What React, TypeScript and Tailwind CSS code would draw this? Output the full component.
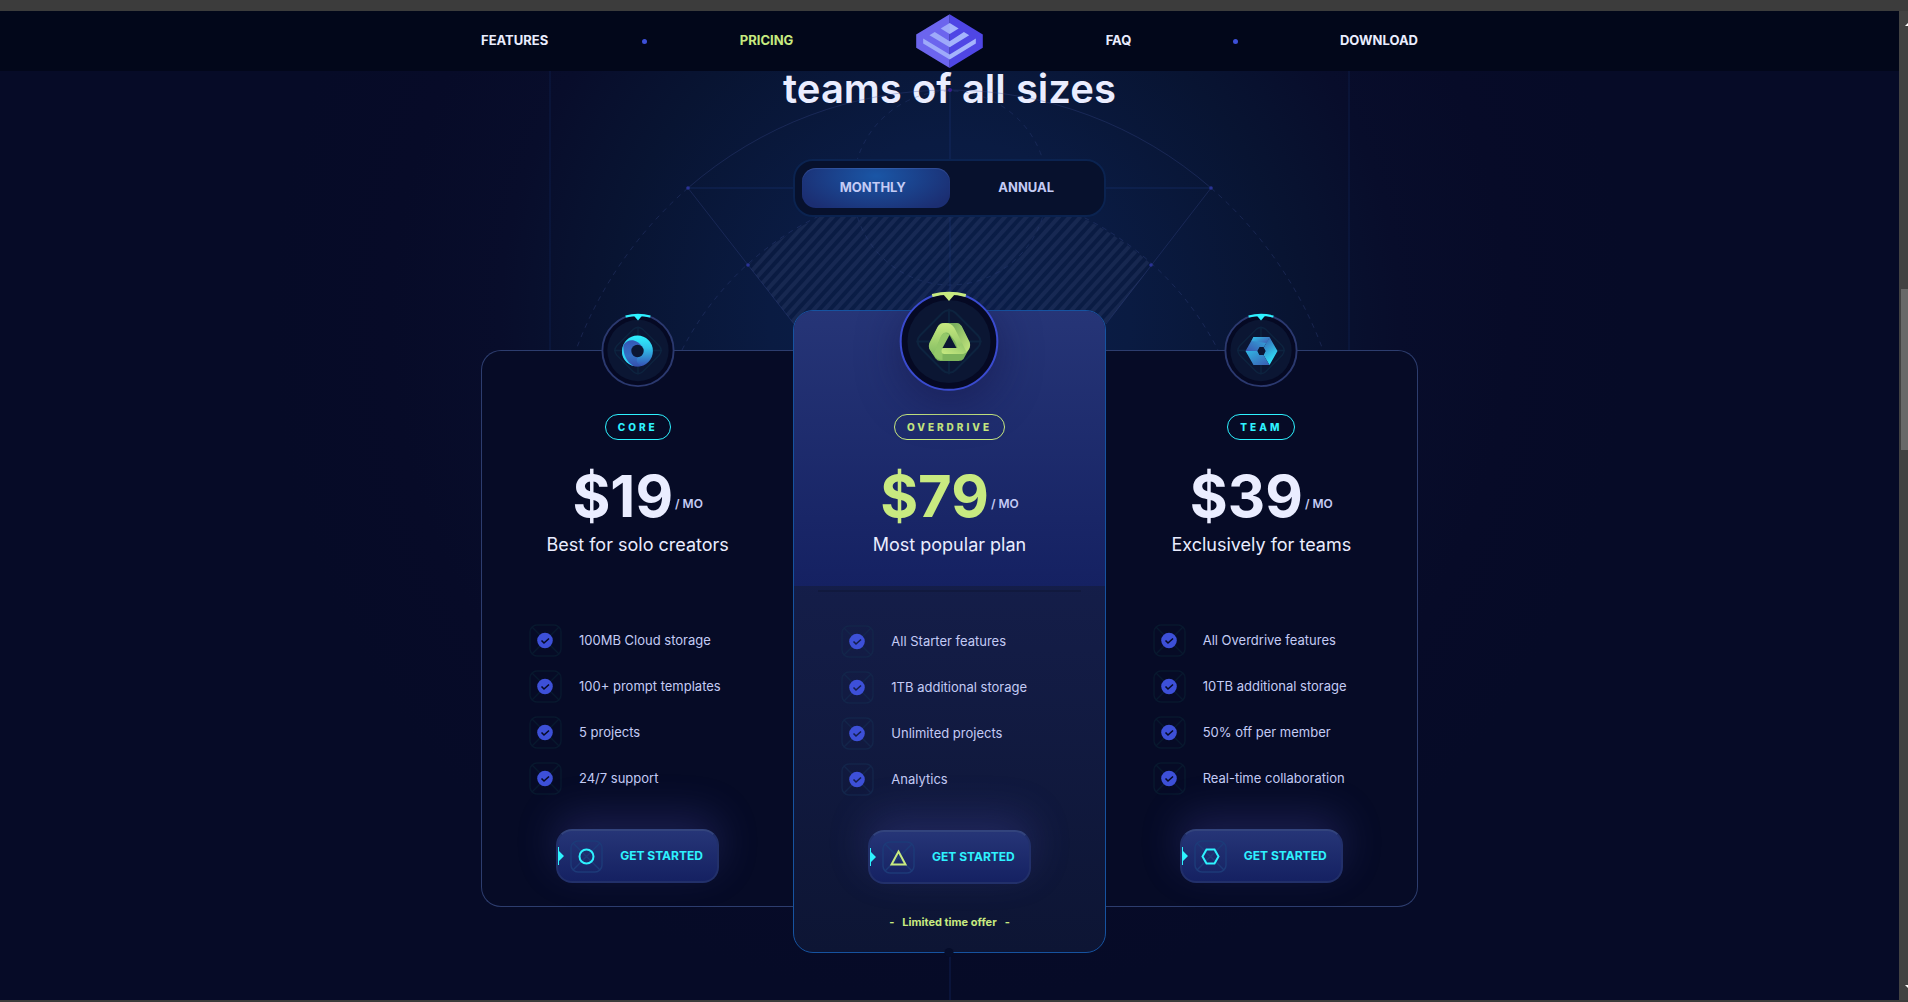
import { useState, type ReactNode } from "react";

function Logo() {
  return (
    <svg viewBox="48 26 201 163" width="67" height="54" aria-hidden="true">
      <path d="M149 27 48 88v40l101 61z" fill="#6d66ee" />
      <path d="m149 27 100 61v40l-100 61z" fill="#4f46e5" />
      <g fill="#a5b4fc">
        <path d="m149 53 27 17-27 16-27-16z" />
        <path d="m88 90 16-10 45 28 43-28 16 10-59 36z" />
        <path d="m69 100 80 48 79-48v15l-79 48-80-48z" />
      </g>
      <path d="M149 27 48 88v40l101 61z" fill="#6d66ee" opacity=".12" />
    </svg>
  );
}

function Backdrop() {
  return (
    <svg
      className="pointer-events-none absolute top-0 left-1/2 z-10 -translate-x-1/2"
      width="1000"
      height="929"
      viewBox="-500 71 1000 929"
      fill="none"
      aria-hidden="true"
    >
      <defs>
        <pattern id="hatch" width="8" height="8" patternUnits="userSpaceOnUse" patternTransform="rotate(42)">
          <rect width="4" height="8" fill="#5b6a9c" fillOpacity=".16" />
        </pattern>
      </defs>
      <path d="M-202 265A301 301 0 0 1 202 265L156 324V340H-156V324Z" fill="url(#hatch)" />
      <g stroke="#1d3a86" strokeOpacity=".3">
        <path d="M-400 71V350M399 71V350" />
        <path d="M0 90V340M0 955V1000" strokeWidth="2" strokeOpacity=".2" />
        <path d="M-262 188H261" strokeWidth="2" strokeOpacity=".22" />
      </g>
      <g stroke="#3a4a8e" strokeOpacity=".32">
        <path d="M-262 188A398 398 0 0 1 261 188" />
        <path d="M-262 188-156 324M261 188 156 324" />
        <g strokeDasharray="5 5">
          <path d="M-262 188A398 398 0 0 0-374 350M261 188A398 398 0 0 1 373 350" />
          <path d="M-268 350A301 301 0 0 1 268 350" />
          <circle cy="188" r="97" strokeOpacity=".28" />
        </g>
      </g>
      <g fill="#2a3396">
        <circle cx="-262" cy="188" r="1.8" />
        <circle cx="261" cy="188" r="1.8" />
        <circle cx="-202" cy="265" r="1.8" />
        <circle cx="201" cy="265" r="1.8" />
        <circle cy="90" r="2" fill="#3a1f8e" />
      </g>
    </svg>
  );
}

function CoreMark() {
  return (
    <svg viewBox="-16 -16 32 32" width="32" height="32" aria-hidden="true">
      <defs>
        <linearGradient id="core-a" x1="0" y1="0" x2="0" y2="1">
          <stop offset="0" stopColor="#2ef2ff" />
          <stop offset=".4" stopColor="#2fc4ea" />
          <stop offset="1" stopColor="#3550b5" />
        </linearGradient>
        <linearGradient id="core-b" x1=".3" y1="0" x2=".3" y2="1">
          <stop offset="0" stopColor="#3557b6" />
          <stop offset=".6" stopColor="#3470c4" />
          <stop offset="1" stopColor="#344fae" />
        </linearGradient>
      </defs>
      <circle r="15.4" fill="url(#core-a)" />
      <path
        d="M-14-6C-10-12.500-1-13 5-4L0 6C-2 10 0 13 4 14.800C-1 16-5 15-8 13C-13 8-15 2-14-6Z"
        fill="url(#core-b)"
      />
      <path d="M-14.500-5C-14 4-11 11-4 14.900C-11 13-16 7-15.400 0Z" fill="#2fd8f4" />
      <circle r="6.200" fill="#0b1633" />
    </svg>
  );
}

function OverdriveMark() {
  return (
    <svg viewBox="0 0 42 38" width="42" height="38" aria-hidden="true">
      <defs>
        <linearGradient id="od-a" x1="0" y1="0" x2="0" y2="1">
          <stop offset="0" stopColor="#c8ea80" />
          <stop offset="1" stopColor="#84bd63" />
        </linearGradient>
        <linearGradient id="od-b" x1="0" y1="0" x2="1" y2="1">
          <stop offset="0" stopColor="#6ea557" />
          <stop offset="1" stopColor="#c8ea80" />
        </linearGradient>
        <linearGradient id="od-c" x1="1" y1="0" x2="0" y2="1">
          <stop offset="0" stopColor="#8cc267" />
          <stop offset="1" stopColor="#c8ea80" />
        </linearGradient>
      </defs>
      <path
        d="M14 0H28Q31 0 33 3L41 19Q42.500 22 41 25L35 36Q33.500 38 30 38H12Q9 38 7 35.500L1 26Q-.5 23 1 20L10 3Q11.500 0 14 0Z"
        fill="#7db45c"
      />
      <path d="M20 0H28Q31 0 33 3L41 19Q42.500 22 41 25Q39 30 33 31L29 25Z" fill="url(#od-b)" />
      <path d="M17 0Q23 0 26 5L32 17Q34 22 31 24L21 11Q16 7 12.500 14L5 32L1 26Q-.5 23 1 20L9 4Q11 0 17 0Z" fill="url(#od-a)" />
      <path d="M21 12Q15 7 12 14L5 31Q8 37 14 37V31Z" fill="#94c869" />
      <path d="M13 28Q13 25 16 25H30Q33 24 33 19L38 29Q36 31 33 31H16Q13 31 13 28Z" fill="url(#od-c)" />
      <path d="M21 12 28 25H14Z" fill="#0b1633" />
    </svg>
  );
}

function TeamMark() {
  return (
    <svg viewBox="-17 -15 34 30" width="34" height="30" aria-hidden="true">
      <defs>
        <linearGradient id="tm-a" x1="0" y1="0" x2="1" y2=".6">
          <stop offset="0" stopColor="#31c3ea" />
          <stop offset="1" stopColor="#3e68ba" />
        </linearGradient>
        <linearGradient id="tm-b" x1="0" y1="0" x2=".4" y2="1">
          <stop offset="0" stopColor="#3858ae" />
          <stop offset="1" stopColor="#2fe6fb" />
        </linearGradient>
        <linearGradient id="tm-c" x1="1" y1="1" x2="0" y2="0">
          <stop offset="0" stopColor="#3a5cb0" />
          <stop offset="1" stopColor="#30b6e4" />
        </linearGradient>
        <linearGradient id="tm-d" x1="0" y1="1" x2="1" y2="0">
          <stop offset="0" stopColor="#3a55b0" />
          <stop offset="1" stopColor="#31b9e4" />
        </linearGradient>
      </defs>
      <path d="M-16 0-8-14H8L2-3H-2L-4 0Z" fill="url(#tm-d)" />
      <path d="M-8-14H8L5-8-10-10Z" fill="url(#tm-a)" />
      <path d="M8-14 16 0 8 14 2 4 4 0 2-3Z" fill="url(#tm-b)" />
      <path d="M-16 0H-4L-2 4H2L8 14H-8Z" fill="url(#tm-c)" />
      <path d="M-4 0-2-4H2L4 0 2 4H-2Z" fill="#0b1633" />
    </svg>
  );
}

function Medallion({ large = false, children }: { large?: boolean; children: ReactNode }) {
  const accent = large ? "#c8ea80" : "#2ef2ff";
  return (
    <div
      className={
        large
          ? "absolute top-[-19px] left-1/2 z-10 size-[99px] -translate-x-1/2 rounded-full shadow-[0_12px_40px_rgba(20,20,70,0.5)]"
          : "absolute top-[-37px] left-1/2 z-10 size-[73px] -translate-x-1/2 rounded-full"
      }
    >
      <svg viewBox="-50 -50 100 100" className="block size-full overflow-visible" fill="none" aria-hidden="true">
        <circle r="48.800" fill="#050923" stroke={large ? "#3a4bd0" : "#2b396f"} strokeWidth={large ? 2 : 2.6} />
        <circle r="42" fill="#0b1633" />
        <g stroke="#0f2c47" strokeWidth="2" opacity=".6">
          <rect x="-25" y="-25" width="50" height="50" rx="9" transform="rotate(45)" />
          <path d="M0-33V33M-33 0H33" />
        </g>
        <path d="M-17-46.500Q0-51 17-46.500" stroke={accent} strokeWidth="3" />
        <path d="M-6.500-48.500H6.500L0-41Z" fill={accent} />
      </svg>
      <span className="absolute inset-0 flex items-center justify-center">{children}</span>
    </div>
  );
}

function BoxLines({ stroke }: { stroke: string }) {
  return (
    <>
      <rect x="1" y="1" width="31" height="31" rx="7" stroke={stroke} strokeWidth="1.500" />
      <path d="m3 3 27 27M30 3 3 30" stroke={stroke} strokeWidth="1.500" />
    </>
  );
}

function CheckBadge({ featured }: { featured: boolean }) {
  return (
    <svg width="33" height="33" viewBox="0 0 33 33" fill="none" className="shrink-0" aria-hidden="true">
      <BoxLines stroke={featured ? "#13254a" : "#08182e"} />
      <circle cx="16" cy="16.500" r="7.800" fill="#3d50d8" />
      <path d="m12.500 16.500 2.500 2.500 5-4.500" stroke={featured ? "#151e4b" : "#060a25"} strokeWidth="1.600" />
    </svg>
  );
}

type Shape = "circle" | "triangle" | "hexagon";

function CtaIcon({ shape }: { shape: Shape }) {
  return (
    <svg width="33" height="33" viewBox="0 0 33 33" fill="none" className="shrink-0" aria-hidden="true">
      <BoxLines stroke="#1d3a78" />
      {shape === "circle" && <circle cx="16.500" cy="16.500" r="7" stroke="#2ef2ff" strokeWidth="2" />}
      {shape === "triangle" && <path d="M16.500 10.500 23.500 23.500H9.500Z" stroke="#c8ea80" strokeWidth="2" />}
      {shape === "hexagon" && (
        <path d="M12.500 9.500H20.500L24.500 16.500 20.500 23.500H12.500L8.500 16.500Z" stroke="#2ef2ff" strokeWidth="2" />
      )}
    </svg>
  );
}

type Plan = {
  name: string;
  price: string;
  tagline: string;
  features: string[];
  shape: Shape;
  mark: ReactNode;
  frame: string;
  featured?: boolean;
};

const plans: Plan[] = [
  {
    name: "CORE",
    price: "$19",
    tagline: "Best for solo creators",
    features: ["100MB Cloud storage", "100+ prompt templates", "5 projects", "24/7 support"],
    shape: "circle",
    mark: <CoreMark />,
    frame: "mt-10 rounded-l-[20px] border-y border-l border-[#2d3d6e] bg-[#060b26] pt-[63px] pb-[23px]",
  },
  {
    name: "OVERDRIVE",
    price: "$79",
    tagline: "Most popular plan",
    features: ["All Starter features", "1TB additional storage", "Unlimited projects", "Analytics"],
    shape: "triangle",
    mark: <OverdriveMark />,
    frame: "rounded-[20px] border border-[#1653a0] bg-linear-to-b from-[#1a2459] to-[#0d1534] pb-[22px]",
    featured: true,
  },
  {
    name: "TEAM",
    price: "$39",
    tagline: "Exclusively for teams",
    features: ["All Overdrive features", "10TB additional storage", "50% off per member", "Real-time collaboration"],
    shape: "hexagon",
    mark: <TeamMark />,
    frame: "mt-10 rounded-r-[20px] border-y border-r border-[#2d3d6e] bg-[#060b26] pt-[63px] pb-[23px]",
  },
];

function PlanCard({ plan }: { plan: Plan }) {
  const featured = Boolean(plan.featured);
  return (
    <article className={`relative z-20 flex flex-col ${plan.frame}`}>
      <Medallion large={featured}>{plan.mark}</Medallion>
      <div
        className={
          featured
            ? "flex flex-col items-center rounded-t-[19px] bg-linear-to-b from-[#263577] to-[#152162] pt-[103px] pb-[27px]"
            : "flex flex-col items-center pb-[27px]"
        }
      >
        <h3
          className={`flex h-[26px] items-center rounded-full border px-3 text-[10px] font-extrabold tracking-[0.3em] ${
            featured ? "border-[#c8ea80] text-[#c8ea80]" : "border-[#2ef2ff] text-[#2ef2ff]"
          }`}
        >
          {plan.name}
        </h3>
        <p className="mt-6 flex items-end gap-0.5">
          <span className={`text-[58px] leading-[64px] font-bold ${featured ? "text-[#c8ea80]" : "text-[#eaedff]"}`}>
            {plan.price}
          </span>
          <span className="pb-4 text-xs leading-4 font-semibold text-[#c4cbf5]">/ MO</span>
        </p>
        <p className="mt-[3px] text-lg leading-7 text-[#eaedff]">{plan.tagline}</p>
      </div>
      {featured && <div className="mx-6 mt-1 -mb-[5px] h-0.5 bg-[#10183a] opacity-70" />}
      <ul className="flex flex-col gap-[13px] pt-[38px] pl-[47px]">
        {plan.features.map((feature) => (
          <li key={feature} className="flex items-center gap-[17px] text-[13px] text-[#c4cbf5]">
            <CheckBadge featured={featured} />
            {feature}
          </li>
        ))}
      </ul>
      <button
        type="button"
        className="relative mt-[34px] flex h-[54px] w-[163px] items-center self-center rounded-2xl border-2 border-[#22306a] border-t-[#33447d] bg-linear-to-b from-[#263577] to-[#152162] pl-3 shadow-[0_-14px_40px_rgba(86,88,200,0.24)]"
      >
        <svg viewBox="0 0 6 18" width="6" height="18" className="absolute left-0" fill="#2ef2ff" aria-hidden="true">
          <path d="M0 0H1V4L6 9 1 14V18H0Z" />
        </svg>
        <CtaIcon shape={plan.shape} />
        <span className="ml-[17px] text-xs font-bold whitespace-nowrap text-[#2ef2ff]">GET STARTED</span>
      </button>
      {featured && (
        <p className="mt-[30px] flex justify-center gap-2 text-[11px] leading-4 font-bold text-[#c8ea80]">
          <span>-</span>
          <span>Limited time offer</span>
          <span>-</span>
        </p>
      )}
      {featured && (
        <span className="absolute bottom-[-5px] left-1/2 size-[9px] -translate-x-1/2 rounded-full bg-[#060d2a]" />
      )}
    </article>
  );
}

const linkStyle = "transition-colors hover:text-[#c8ea80]";

function Header() {
  return (
    <header className="flex h-[60px] justify-center bg-[#02071a]">
      <nav className="grid w-full max-w-[937px] grid-cols-3 items-center text-[13px] font-bold text-[#eaedff]">
        <div className="flex items-center justify-between">
          <a href="#features" className={linkStyle}>FEATURES</a>
          <span className="size-[5px] rounded-full bg-[#3d50d8]" />
          <a href="#pricing" className="text-[#c8ea80]">PRICING</a>
        </div>
        <a href="#home" aria-label="Home" className="justify-self-center">
          <Logo />
        </a>
        <div className="flex items-center justify-between">
          <a href="#faq" className={linkStyle}>FAQ</a>
          <span className="size-[5px] rounded-full bg-[#3d50d8]" />
          <a href="#download" className={linkStyle}>DOWNLOAD</a>
        </div>
      </nav>
    </header>
  );
}

function BillingToggle() {
  const [annual, setAnnual] = useState(false);
  const on =
    "bg-[radial-gradient(ellipse_60%_110%_at_50%_20%,#1a56a6,#1b2e72_95%)] shadow-[inset_0_1px_1px_rgba(120,140,220,0.25)]";
  return (
    <div
      role="group"
      aria-label="Billing period"
      className="relative z-20 mx-auto mt-[50px] grid w-full max-w-[313px] grid-cols-2 rounded-[20px] border-2 border-[#0b2350] bg-[#07112d] p-[7px] text-[13px] font-bold text-[#c4cbf5]"
    >
      <button type="button" aria-pressed={!annual} onClick={() => setAnnual(false)} className={`h-10 rounded-[14px] pr-1.5 ${annual ? "" : on}`}>
        MONTHLY
      </button>
      <button type="button" aria-pressed={annual} onClick={() => setAnnual(true)} className={`h-10 rounded-[14px] pl-1.5 ${annual ? on : ""}`}>
        ANNUAL
      </button>
    </div>
  );
}

function Scrollbar() {
  return (
    <div className="flex w-[9px] shrink-0 flex-col bg-[#424242] pl-0.5" aria-hidden="true">
      <svg viewBox="0 0 7 4" width="7" height="4" className="mt-[11px]" fill="#fff">
        <path d="M4 4 8 0V4Z" />
      </svg>
      <div className="mt-[263px] h-[161px] bg-[#696969]" />
      <svg viewBox="0 0 7 4" width="7" height="4" className="mt-auto mb-[11px]" fill="#fff">
        <path d="M4 0 8 4V0Z" />
      </svg>
    </div>
  );
}

export default function App() {
  return (
    <div className="flex min-h-screen flex-col border-t-[11px] border-b-2 border-t-[#3c3c3c] border-b-[#3c3d3c] bg-[#060b27] font-[Inter,sans-serif]">
      <div className="flex grow">
        <div className="flex grow flex-col">
          <Header />
          <main
            id="pricing"
            className="relative grow bg-[radial-gradient(circle_at_50%_250px,#0a1f4a_0,#0a1b42_180px,#081432_340px,#080d2b_450px,#070b28_560px,transparent_680px)]"
          >
            <Backdrop />
            <h2 className="-mt-0.5 text-center text-[40px] leading-10 font-semibold text-[#eaedff]">teams of all sizes</h2>
            <BillingToggle />
            <section className="mx-auto mt-[93px] grid w-full max-w-[937px] grid-cols-3 items-start" aria-label="Plans">
              {plans.map((plan) => (
                <PlanCard key={plan.name} plan={plan} />
              ))}
            </section>
          </main>
        </div>
        <Scrollbar />
      </div>
    </div>
  );
}
